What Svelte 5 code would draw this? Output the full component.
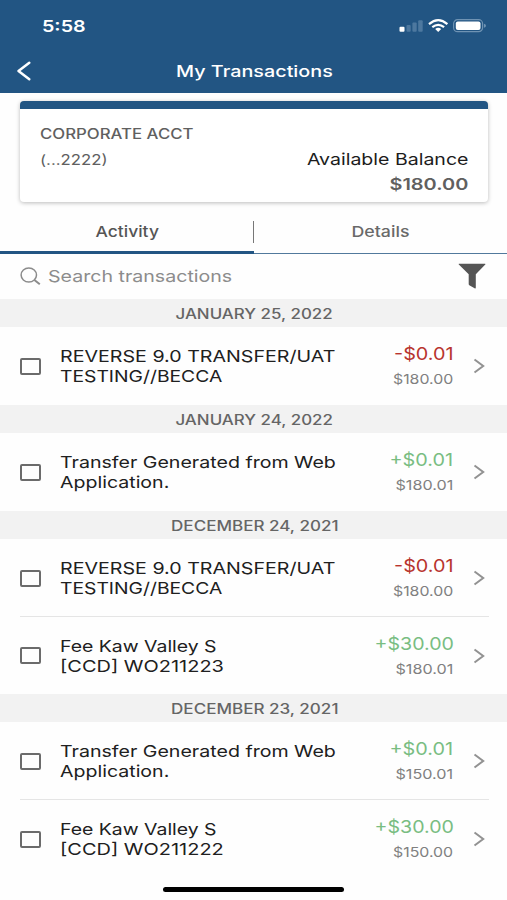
<script>
  const groups = [
    { date: 'JANUARY 25, 2022', width: 157, rows: [
      { lines: [['REVERSE 9.0 TRANSFER/UAT', 275], ['TESTING//BECCA', 162.5]], amount: '-$0.01', aw: 60, balance: '$180.00', bw: 60 }
    ] },
    { date: 'JANUARY 24, 2022', width: 157, rows: [
      { lines: [['Transfer Generated from Web', 275.5], ['Application.', 109]], amount: '+$0.01', aw: 63.5, balance: '$180.01', bw: 57.5 }
    ] },
    { date: 'DECEMBER 24, 2021', width: 168, rows: [
      { lines: [['REVERSE 9.0 TRANSFER/UAT', 275], ['TESTING//BECCA', 162.5]], amount: '-$0.01', aw: 60, balance: '$180.00', bw: 60 },
      { lines: [['Fee Kaw Valley S', 156.5], ['[CCD] WO211223', 163.5]], amount: '+$30.00', aw: 79.5, balance: '$180.01', bw: 57.5 }
    ] },
    { date: 'DECEMBER 23, 2021', width: 168, rows: [
      { lines: [['Transfer Generated from Web', 275.5], ['Application.', 109]], amount: '+$0.01', aw: 63.5, balance: '$150.01', bw: 57.5 },
      { lines: [['Fee Kaw Valley S', 156.5], ['[CCD] WO211222', 163.5]], amount: '+$30.00', aw: 79.5, balance: '$150.00', bw: 60 }
    ] }
  ];

  // Widens the letterforms of a label until it spans the given width.
  function stretch(node, width) {
    node.style.transform = `scaleX(${width / node.offsetWidth})`;
  }
</script>

<div class="screen">
  <header>
    <div class="status">
      <span class="t time" use:stretch={43}>5:58</span>
      <svg class="indicators" width="90" height="20" viewBox="0 0 90 20">
        <rect x="2.500" y="10.800" width="5" height="5" rx="1" fill="#fff" />
        <g fill="#4d789f">
          <rect x="9.500" y="9" width="4.200" height="6.800" rx="1" />
          <rect x="15.400" y="6.500" width="4.300" height="9.300" rx="1" />
          <rect x="21.200" y="4.300" width="4.500" height="11.500" rx="1" />
        </g>
        <g fill="none" stroke="#fff" stroke-width="2.200">
          <path d="M32 8.200Q41.200 .2 50.400 8.200" />
          <path d="M35.300 11.200Q41.200 6.400 47.100 11.200" />
        </g>
        <path d="M38.200 13Q41.200 10.600 44.200 13L41.200 16Z" fill="#fff" />
        <rect x="56.600" y="3.700" width="29" height="12" rx="4" fill="none" stroke="#6f93b3" stroke-width="1.200" />
        <rect x="58.800" y="5.500" width="24.700" height="8.500" rx="2" fill="#fff" />
        <path d="M87 7.700Q89 8.200 89 9.700T87 11.700Z" fill="#6f93b3" />
      </svg>
    </div>
    <div class="nav">
      <svg class="back" width="16" height="20" viewBox="0 0 16 20"><path d="M13.300 1.800L2.500 10L13.300 18.200" fill="none" stroke="#fff" stroke-width="2.500" stroke-linecap="round" stroke-linejoin="round" /></svg>
      <span class="t c title" use:stretch={157}>My Transactions</span>
    </div>
  </header>

  <section class="card">
    <div class="account"><span class="t" use:stretch={153.5}>CORPORATE ACCT</span></div>
    <div class="summary">
      <span class="t number" use:stretch={67}>(...2222)</span>
      <div class="available">
        <span class="t r label" use:stretch={161}>Available Balance</span>
        <span class="t r total" use:stretch={78.5}>$180.00</span>
      </div>
    </div>
  </section>

  <nav class="tabs">
    <div class="tab active"><span class="t c" use:stretch={64}>Activity</span></div>
    <div class="tab"><span class="t c" use:stretch={58}>Details</span></div>
    <i class="split"></i>
  </nav>

  <div class="search">
    <svg width="22" height="19" viewBox="0 0 22 19" fill="none" stroke="#8b8b8b" stroke-width="1.500"><ellipse cx="8.800" cy="8" rx="7.700" ry="7" /><path d="M14.400 13L19.800 17.200" stroke-width="2" /></svg>
    <span class="t" use:stretch={184}>Search transactions</span>
    <svg class="filter" width="28" height="26" viewBox="0 0 28 26"><path d="M1 .8H27Q27.800 .8 27.300 1.600L17.800 11.300V24.500Q17.800 26 16.600 25.300L11.300 22.200Q10.700 21.800 10.700 21V11.300L.8 1.600Q.3 .8 1 .8Z" fill="#555" /></svg>
  </div>

  {#each groups as group}
    <h2><span class="t c" use:stretch={group.width}>{group.date}</span></h2>
    {#each group.rows as row, i}
      <article class:divided={i > 0}>
        <span class="check"></span>
        <div class="description">
          {#each row.lines as [text, width]}
            <div><span class="t" use:stretch={width}>{text}</span></div>
          {/each}
        </div>
        <div class="money">
          <span class="t r amount" class:debit={row.amount[0] === '-'} use:stretch={row.aw}>{row.amount}</span>
          <span class="t r balance" use:stretch={row.bw}>{row.balance}</span>
        </div>
        <svg class="chevron" width="12" height="16" viewBox="0 0 12 16"><path d="M1.500 1.500L10.200 8L1.500 14.500" fill="none" stroke="#929292" stroke-width="2" /></svg>
      </article>
    {/each}
  {/each}
  <div class="home"></div>
</div>

<style>
  :global(body) { background: #fff; }
  .screen { position: relative; width: 507px; height: 900px; overflow: hidden; background: #fefefe; font-family: Inter, Roboto, sans-serif; color: #202020; }
  .t { display: inline-block; white-space: nowrap; transform-origin: left center; }
  .c { transform-origin: center; }
  .r { transform-origin: right center; }
  header { height: 93px; background: #225583; color: #fff; }
  .status { display: flex; justify-content: space-between; height: 50px; padding: 16px 20px 0 42px; box-sizing: border-box; }
  .time { font-size: 16px; line-height: 20px; font-weight: 600; }
  .nav { display: grid; grid-template-columns: 40px 1fr 38px; align-items: center; height: 42px; }
  .back { margin-left: 16px; }
  .title { justify-self: center; font-size: 16px; line-height: 20px; font-weight: 500; }
  .card { box-sizing: border-box; height: 101px; margin: 8px 19px 0 20px; padding: 15px 20px 0; border-top: 8px solid #225583; border-radius: 4px; background: #fff; box-shadow: 0 1px 4px #0004; color: #606060; }
  .account { height: 20px; font-size: 14px; line-height: 20px; font-weight: 500; }
  .summary { display: flex; justify-content: space-between; margin-top: 4px; }
  .number { height: 24px; font-size: 14px; line-height: 24px; }
  .available { display: flex; flex-direction: column; align-items: flex-end; }
  .label { font-size: 16.500px; line-height: 22px; color: #1c1c1c; }
  .total { font-size: 15.500px; line-height: 30px; font-weight: 600; }
  .tabs { position: relative; display: flex; height: 52px; }
  .tab { display: flex; flex: 1; align-items: center; justify-content: center; padding-top: 8px; box-sizing: border-box; border-bottom: 1.500px solid #51799c; font-size: 15px; font-weight: 500; color: #696969; }
  .tab.active { border-bottom: 3px solid #225583; color: #555; padding-top: 10px; }
  .split { position: absolute; left: 252.500px; top: 19px; width: 1.500px; height: 22px; background: #777; }
  .search { display: flex; align-items: center; height: 45px; padding: 0 21px 1px 20px; box-sizing: border-box; font-size: 16.500px; color: #8c8c8c; }
  .search .t { margin-left: 6px; }
  .filter { margin-left: auto; }
  h2 { display: flex; height: 28px; margin: 0; align-items: center; justify-content: center; padding-left: 2px; background: #f2f2f2; color: #656565; font-size: 14px; font-weight: 500; }
  article { position: relative; display: flex; height: 78px; align-items: center; padding: 0 22px 0 20px; }
  article.divided { height: 77.400px; }
  .divided::before { content: ''; position: absolute; left: 20px; right: 18px; top: -1px; height: 1px; background: #e5e5e5; }
  .check { width: 20.500px; height: 17px; box-sizing: border-box; border: 2px solid #6b6b6b; border-radius: 2px; }
  .description { margin-left: 19px; font-size: 16.500px; line-height: 20px; }
  .description div { height: 20px; }
  .money { display: flex; flex-direction: column; align-items: flex-end; margin-left: auto; }
  .amount { font-size: 17.500px; line-height: 26px; color: #79bd82; }
  .debit { color: #b8342e; }
  .balance { font-size: 13.500px; line-height: 24px; color: #808080; }
  .chevron { margin-left: 19.500px; }
  .home { position: absolute; left: 163px; top: 887px; width: 181px; height: 5px; border-radius: 3px; background: #000; }
</style>
